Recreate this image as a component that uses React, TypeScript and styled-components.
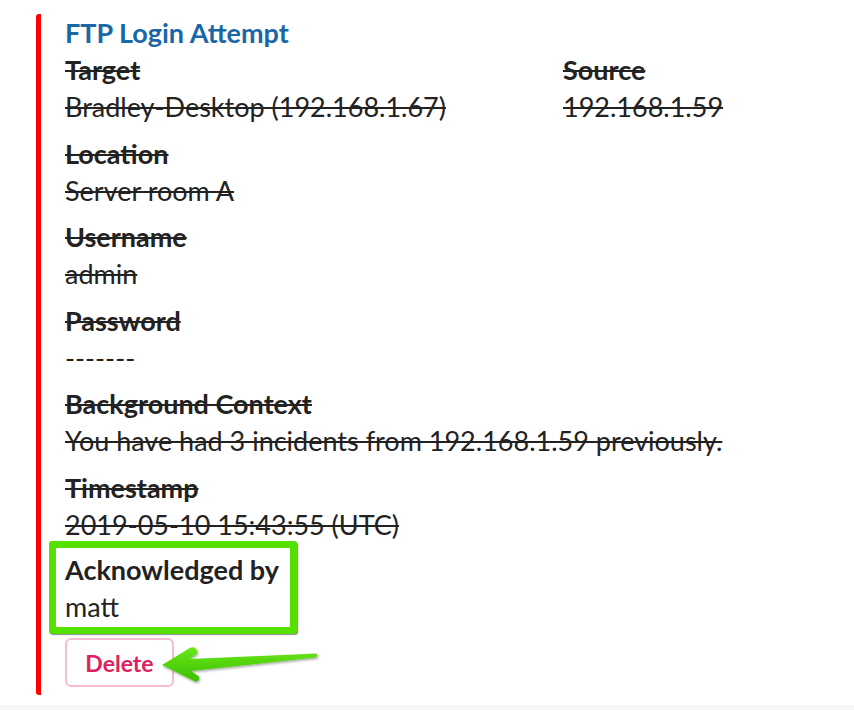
import styled, { createGlobalStyle } from 'styled-components';

const GlobalStyle = createGlobalStyle`
  body {
    margin: 0;
    background: #f7f7f7;
    font-family: Lato, "Open Sans", sans-serif;
    color: #222;
  }
`;

type FieldData = { label: string; value: string; plainValue?: boolean };

const topRow: FieldData[] = [
  { label: 'Target', value: 'Bradley-Desktop (192.168.1.67)' },
  { label: 'Source', value: '192.168.1.59' },
];

const fields: FieldData[] = [
  { label: 'Location', value: 'Server room A' },
  { label: 'Username', value: 'admin' },
  { label: 'Password', value: '-------', plainValue: true },
  {
    label: 'Background Context',
    value: 'You have had 3 incidents from 192.168.1.59 previously.',
  },
  { label: 'Timestamp', value: '2019-05-10 15:43:55 (UTC)' },
];

function Field({ label, value, plainValue }: FieldData) {
  return (
    <div>
      <Label struck>{label}</Label>
      <Value struck={!plainValue}>{value}</Value>
    </div>
  );
}

function Arrow() {
  return (
    <ArrowSvg width="170" height="50" viewBox="0 0 170 50">
      <defs>
        <linearGradient id="arrowFill" x1="0" y1="0" x2="0" y2="1">
          <stop offset="0" stopColor="#6ae81a" />
          <stop offset="1" stopColor="#3cbf00" />
        </linearGradient>
        <filter id="arrowShadow" x="-10%" y="-30%" width="120%" height="160%">
          <feDropShadow dx="1" dy="1.5" stdDeviation="1" floodColor="#000" floodOpacity="0.35" />
        </filter>
      </defs>
      <path
        d="M1,25 L28,8.5 Q33,5.5 35.5,9.5 L36.5,13 L29,19 L155,13.5 Q158,15.5 155,17.5 L30,31 L38,36.5 Q39,41 34,41.5 Z"
        fill="url(#arrowFill)"
        filter="url(#arrowShadow)"
      />
    </ArrowSvg>
  );
}

export default function App() {
  return (
    <>
      <GlobalStyle />
      <Page>
        <Alert>
          <Title>FTP Login Attempt</Title>
          <FieldList>
            <TwoColumns>
              {topRow.map((f) => (
                <Field key={f.label} {...f} />
              ))}
            </TwoColumns>
            {fields.map((f) => (
              <Field key={f.label} {...f} />
            ))}
          </FieldList>
          <Highlight>
            <Label>Acknowledged by</Label>
            <Value>matt</Value>
          </Highlight>
          <ActionRow>
            <DeleteButton>Delete</DeleteButton>
            <Arrow />
          </ActionRow>
        </Alert>
      </Page>
    </>
  );
}

const Page = styled.div`
  background: #fff;
  padding: 14px 0 10px 36px;
`;

const Alert = styled.div`
  border-left: 5px solid #fe0000;
  border-radius: 3px;
  padding: 1px 0 5px 24px;
`;

const Title = styled.div`
  color: #1b67a5;
  font-size: 27px;
  font-weight: 700;
  line-height: 36px;
`;

const FieldList = styled.div`
  display: flex;
  flex-direction: column;
  gap: 9.5px;
`;

const TwoColumns = styled.div`
  display: grid;
  grid-template-columns: 498px 1fr;
`;

const Label = styled.div<{ struck?: boolean }>`
  font-size: 27px;
  font-weight: 700;
  line-height: 37px;
  text-decoration: ${(p) => (p.struck ? 'line-through' : 'none')};
`;

const Value = styled.div<{ struck?: boolean }>`
  font-size: 27px;
  font-weight: 400;
  line-height: 37px;
  text-decoration: ${(p) => (p.struck ? 'line-through' : 'none')};
`;

const Highlight = styled.div`
  width: fit-content;
  margin: -1.5px 0 0 -16px;
  padding: 3px 11px 2px 9px;
  border: 7px solid #54e100;
  border-radius: 3px;
  box-shadow: 1px 1px 1px rgba(0, 0, 0, 0.45);
  background: #fff;
`;

const ActionRow = styled.div`
  display: flex;
  align-items: flex-start;
  margin-top: 4px;
`;

const DeleteButton = styled.button`
  height: 49px;
  width: 109px;
  padding: 0;
  background: #fff;
  border: 2px solid #f7bccf;
  border-radius: 6px;
  color: #e0215e;
  font-family: Lato, "Open Sans", sans-serif;
  font-size: 23px;
  font-weight: 700;
  cursor: pointer;
`;

const ArrowSvg = styled.svg`
  display: block;
  margin: 2px 0 0 -13px;
  overflow: visible;
`;
